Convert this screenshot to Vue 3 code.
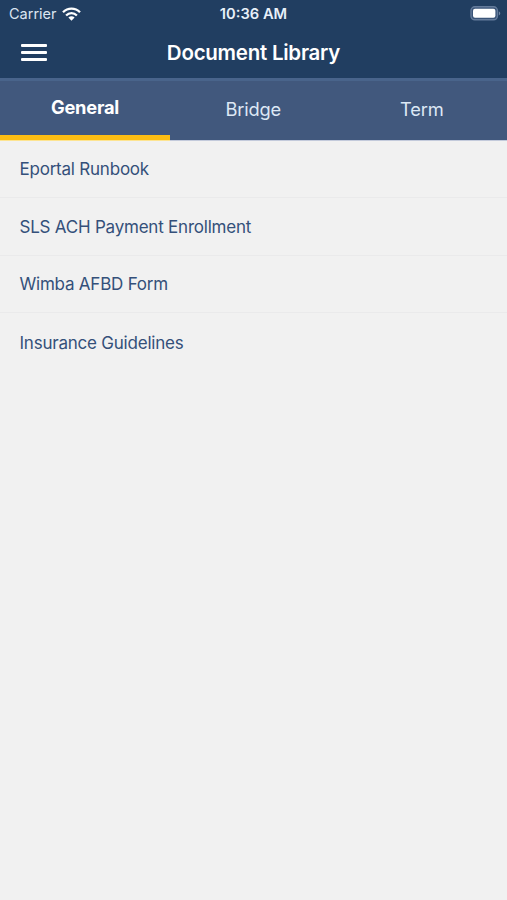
<template>
  <div class="screen">
    <header class="header">
      <div class="status-bar">
        <div class="carrier">
          <span class="carrier-name">Carrier</span>
          <svg class="wifi" width="19" height="14" viewBox="0 0 19 14" fill="none" stroke="#fff" stroke-width="2.3">
            <path d="M1 5.3C5.8 0.4 13.2 0.4 18 5.3" />
            <path d="M4.1 8.5C7.2 5.4 11.8 5.4 14.9 8.5" />
            <path d="M9.5 13.8L6.4 10.6C8.2 8.9 10.8 8.9 12.6 10.6Z" fill="#fff" stroke="none" />
          </svg>
        </div>
        <span class="time">10:36 AM</span>
        <svg class="battery" width="31" height="15" viewBox="0 0 31 15">
          <rect x="1" y="0.8" width="26.4" height="13" rx="3.8" fill="#3a5478" stroke="#647b9b" stroke-width="1.4" />
          <rect x="3" y="2.8" width="22.4" height="9" rx="2" fill="#fff" />
          <path d="M28.8 5.2C30.8 6 30.8 8.6 28.8 9.4Z" fill="#7286a3" />
        </svg>
      </div>
      <div class="nav-bar">
        <button class="menu-btn" aria-label="Menu">
          <span class="menu-line"></span>
          <span class="menu-line"></span>
          <span class="menu-line"></span>
        </button>
        <h1 class="title">Document Library</h1>
      </div>
    </header>

    <nav class="tabs">
      <button v-for="tab in tabs" :key="tab" class="tab" :class="{ active: tab === activeTab }"
        @click="activeTab = tab">
        <span class="tab-label">{{ tab }}</span>
      </button>
    </nav>

    <ul class="document-list">
      <li v-for="doc in documents" :key="doc" class="document">
        <span class="document-name">{{ doc }}</span>
      </li>
    </ul>
  </div>
</template>

<script setup>
import { ref } from 'vue';

const tabs = ['General', 'Bridge', 'Term'];
const activeTab = ref('General');

const documents = [
  'Eportal Runbook',
  'SLS ACH Payment Enrollment',
  'Wimba AFBD Form',
  'Insurance Guidelines'
];
</script>

<style>
body {
  margin: 0;
  background: #f1f1f1;
}
</style>

<style scoped>
.screen {
  min-height: 100vh;
  background: #f1f1f1;
  font-family: Inter, 'Liberation Sans', sans-serif;
  color: #34507a;
}

.header {
  height: 78px;
  background: #213e61;
  color: #fff;
}

.status-bar {
  display: grid;
  grid-template-columns: 1fr auto 1fr;
  align-items: center;
  height: 27px;
  padding: 0 6px 0 9px;
  font-size: 14.5px;
}

.carrier {
  display: flex;
  align-items: center;
  gap: 5px;
}

.carrier-name {
  color: #dbe5f1;
}

.time {
  margin-right: 3px;
  font-size: 14.7px;
  font-weight: 600;
  color: #e8f0f9;
}

.battery {
  justify-self: end;
}

.nav-bar {
  display: grid;
  grid-template-columns: 60px 1fr 60px;
  align-items: center;
  height: 51px;
}

.menu-btn {
  display: flex;
  flex-direction: column;
  gap: 4px;
  width: 26px;
  margin-left: 21px;
  padding: 0;
  border: none;
  background: none;
  cursor: pointer;
}

.menu-line {
  width: 26px;
  height: 3px;
  border-radius: 1px;
  background: #fff;
}

.title {
  margin: 0;
  font-size: 20.5px;
  font-weight: 600;
  letter-spacing: -0.25px;
  text-align: center;
  white-space: nowrap;
}

.tabs {
  display: grid;
  grid-template-columns: 170px 1fr 1fr;
  box-sizing: border-box;
  height: 62px;
  border-top: 3px solid #49648b;
  background: #41587d;
}

.tab {
  display: flex;
  align-items: center;
  justify-content: center;
  padding: 0 2px 4px 0;
  border: none;
  background: none;
  box-shadow: 0 1px 0 #c3cadb;
  color: #dde8f5;
  font-family: inherit;
  font-size: 18.3px;
  letter-spacing: -0.2px;
  cursor: pointer;
}

.tab.active {
  padding: 0 0 3px;
  border-bottom: 5px solid #fcbd14;
  box-shadow: 0 1px 0 #fde491;
  color: #fff;
  font-weight: 700;
}

.document-list {
  margin: 0;
  padding: 0;
  list-style: none;
}

.document {
  display: flex;
  align-items: center;
  box-sizing: border-box;
  height: 57.8px;
  padding: 1px 19.5px 0;
  border-bottom: 1px solid #eaeaeb;
  font-size: 17px;
  letter-spacing: -0.22px;
}

.document:last-child {
  border-bottom: none;
}
</style>
